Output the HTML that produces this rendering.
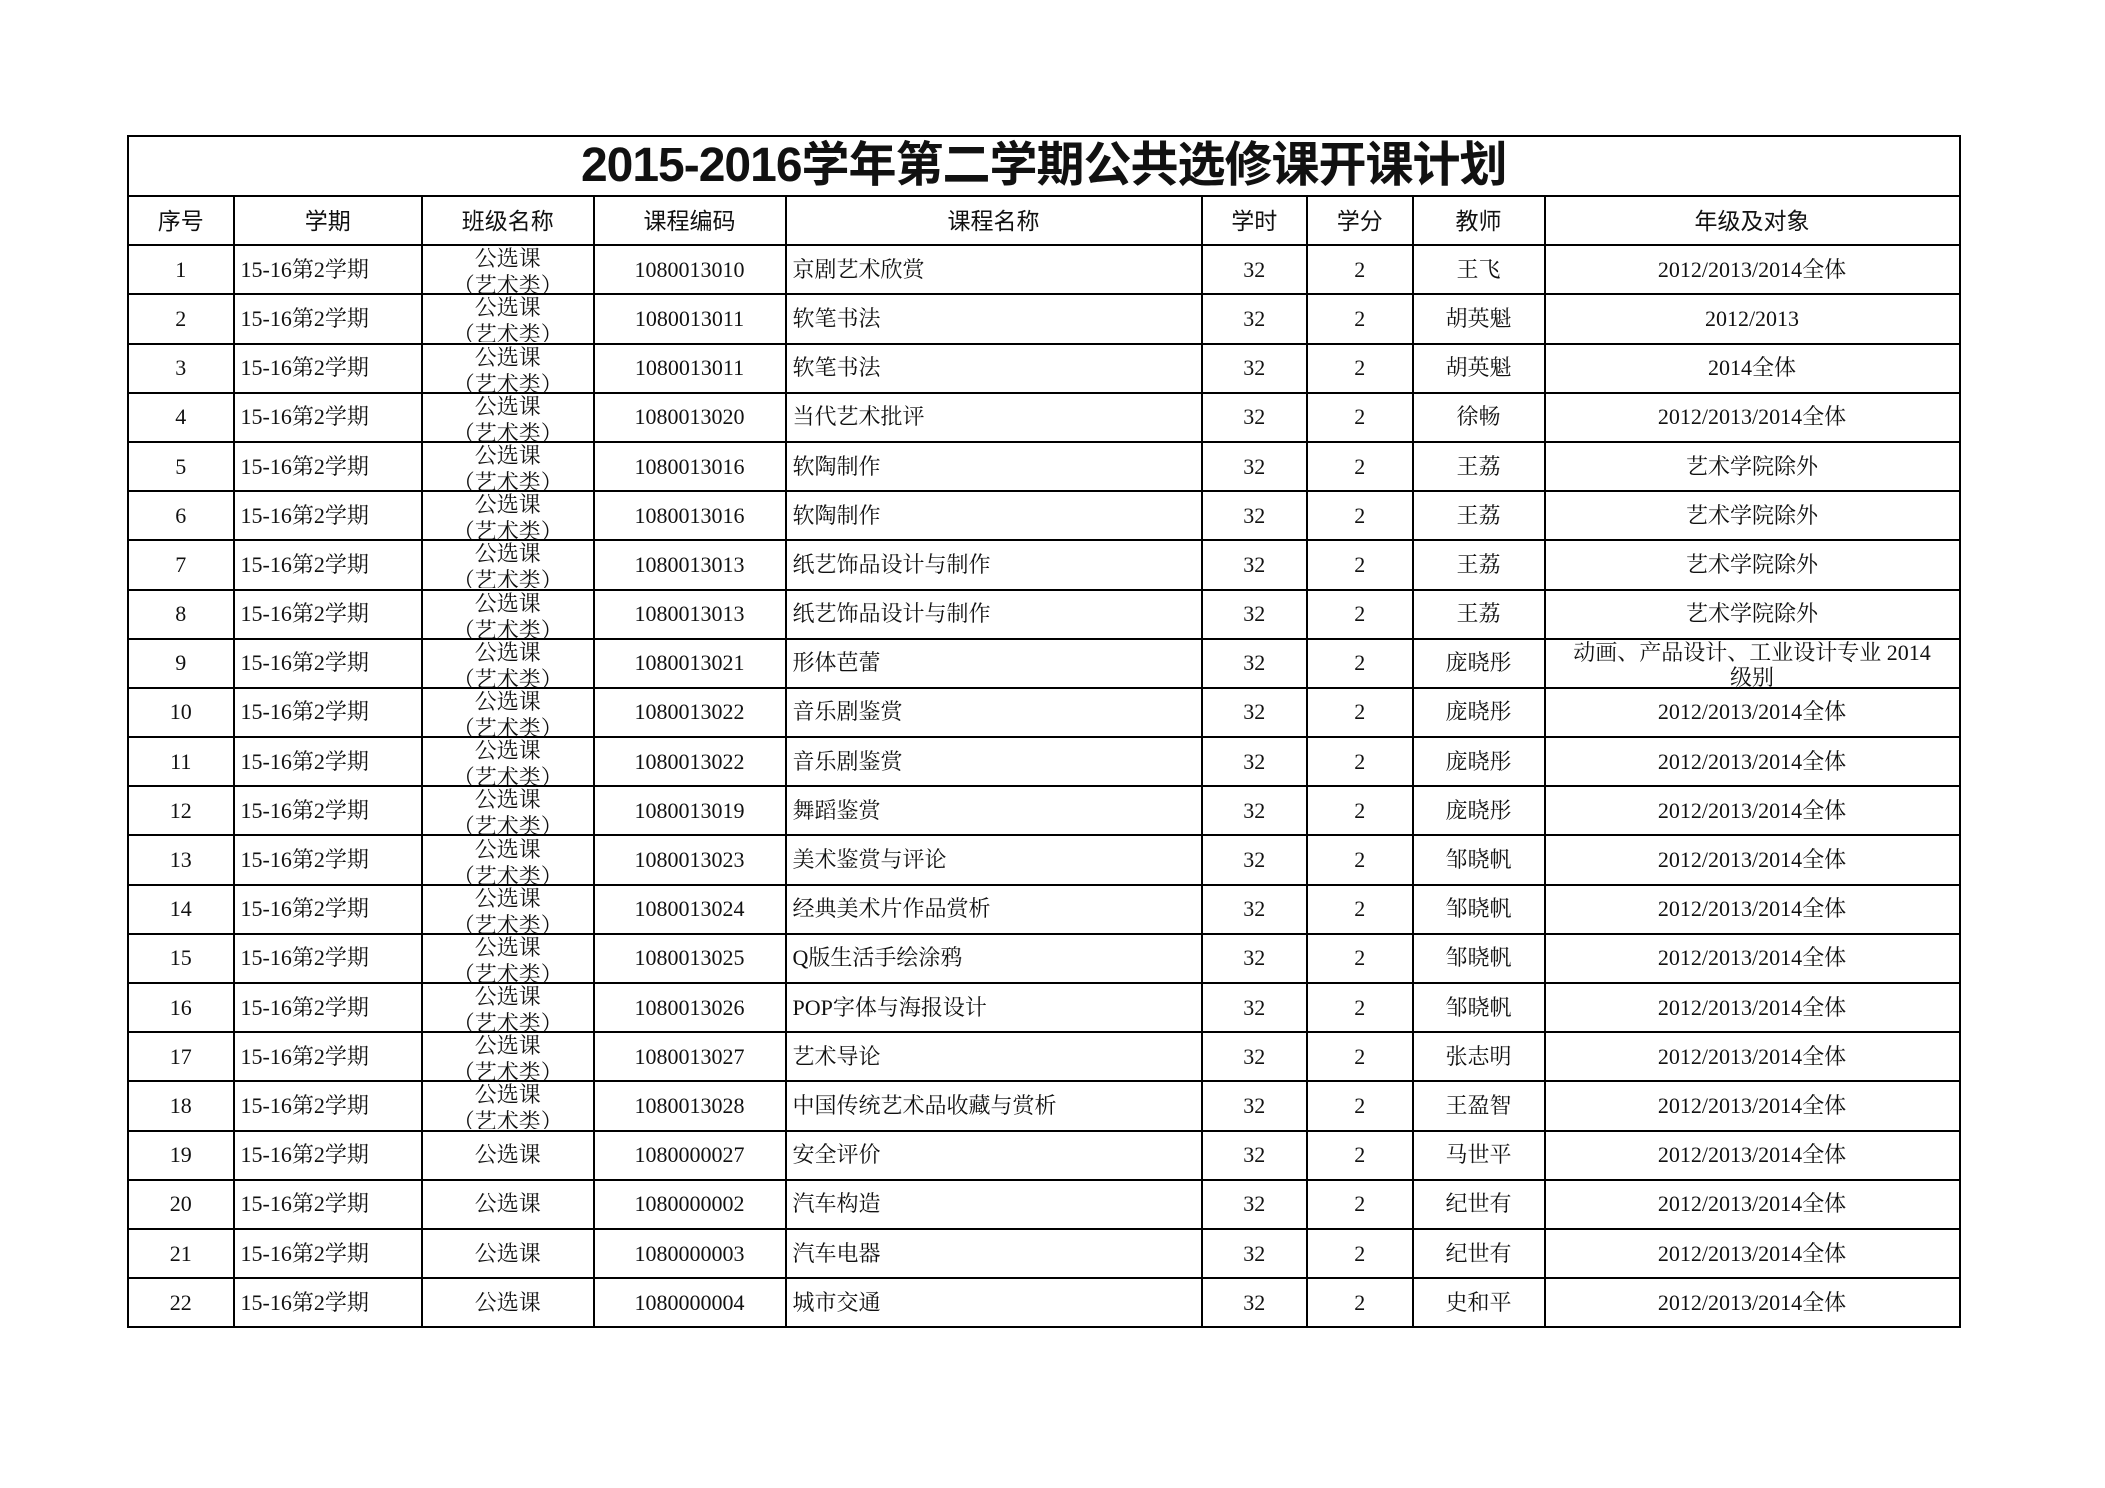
<!DOCTYPE html>
<html><head><meta charset="utf-8"><style>
body{margin:0;background:#fff;width:2105px;height:1488px;position:relative;overflow:hidden}
table{position:absolute;left:127px;top:135px;border-collapse:collapse;table-layout:fixed;width:1832px;font-family:"Liberation Serif","Noto Serif CJK SC",serif;font-size:22px;color:#111}
td{border:2px solid #000;padding:0;text-align:center;vertical-align:middle;height:47.2px;line-height:22px;white-space:nowrap;overflow:hidden}
td.l{text-align:left;padding-left:6px}
.t td{height:58px;font-family:"Liberation Sans","Noto Sans CJK SC",sans-serif;font-weight:bold;font-size:48px;line-height:58px;letter-spacing:-1px}
.h td{font-family:"Liberation Sans","Noto Sans CJK SC",sans-serif;font-size:23px}
.c{height:47px;overflow:hidden;line-height:27px}
.c div{margin-top:-1px}
.w{white-space:normal;line-height:25px}
</style></head><body>
<table>
<colgroup><col style="width:105.5px"><col style="width:188.5px"><col style="width:171.5px"><col style="width:192px"><col style="width:416px"><col style="width:105.5px"><col style="width:105.5px"><col style="width:132px"><col style="width:415px"></colgroup>
<tr class="t"><td colspan="9">2015-2016学年第二学期公共选修课开课计划</td></tr>
<tr class="h"><td>序号</td><td>学期</td><td>班级名称</td><td>课程编码</td><td>课程名称</td><td>学时</td><td>学分</td><td>教师</td><td>年级及对象</td></tr>
<tr><td>1</td><td class="l">15-16第2学期</td><td><div class="c"><div>公选课<br>（艺术类）</div></div></td><td>1080013010</td><td class="l">京剧艺术欣赏</td><td>32</td><td>2</td><td>王飞</td><td>2012/2013/2014全体</td></tr>
<tr><td>2</td><td class="l">15-16第2学期</td><td><div class="c"><div>公选课<br>（艺术类）</div></div></td><td>1080013011</td><td class="l">软笔书法</td><td>32</td><td>2</td><td>胡英魁</td><td>2012/2013</td></tr>
<tr><td>3</td><td class="l">15-16第2学期</td><td><div class="c"><div>公选课<br>（艺术类）</div></div></td><td>1080013011</td><td class="l">软笔书法</td><td>32</td><td>2</td><td>胡英魁</td><td>2014全体</td></tr>
<tr><td>4</td><td class="l">15-16第2学期</td><td><div class="c"><div>公选课<br>（艺术类）</div></div></td><td>1080013020</td><td class="l">当代艺术批评</td><td>32</td><td>2</td><td>徐畅</td><td>2012/2013/2014全体</td></tr>
<tr><td>5</td><td class="l">15-16第2学期</td><td><div class="c"><div>公选课<br>（艺术类）</div></div></td><td>1080013016</td><td class="l">软陶制作</td><td>32</td><td>2</td><td>王荔</td><td>艺术学院除外</td></tr>
<tr><td>6</td><td class="l">15-16第2学期</td><td><div class="c"><div>公选课<br>（艺术类）</div></div></td><td>1080013016</td><td class="l">软陶制作</td><td>32</td><td>2</td><td>王荔</td><td>艺术学院除外</td></tr>
<tr><td>7</td><td class="l">15-16第2学期</td><td><div class="c"><div>公选课<br>（艺术类）</div></div></td><td>1080013013</td><td class="l">纸艺饰品设计与制作</td><td>32</td><td>2</td><td>王荔</td><td>艺术学院除外</td></tr>
<tr><td>8</td><td class="l">15-16第2学期</td><td><div class="c"><div>公选课<br>（艺术类）</div></div></td><td>1080013013</td><td class="l">纸艺饰品设计与制作</td><td>32</td><td>2</td><td>王荔</td><td>艺术学院除外</td></tr>
<tr><td>9</td><td class="l">15-16第2学期</td><td><div class="c"><div>公选课<br>（艺术类）</div></div></td><td>1080013021</td><td class="l">形体芭蕾</td><td>32</td><td>2</td><td>庞晓彤</td><td><div class="c w">动画、产品设计、工业设计专业 2014<br>级别</div></td></tr>
<tr><td>10</td><td class="l">15-16第2学期</td><td><div class="c"><div>公选课<br>（艺术类）</div></div></td><td>1080013022</td><td class="l">音乐剧鉴赏</td><td>32</td><td>2</td><td>庞晓彤</td><td>2012/2013/2014全体</td></tr>
<tr><td>11</td><td class="l">15-16第2学期</td><td><div class="c"><div>公选课<br>（艺术类）</div></div></td><td>1080013022</td><td class="l">音乐剧鉴赏</td><td>32</td><td>2</td><td>庞晓彤</td><td>2012/2013/2014全体</td></tr>
<tr><td>12</td><td class="l">15-16第2学期</td><td><div class="c"><div>公选课<br>（艺术类）</div></div></td><td>1080013019</td><td class="l">舞蹈鉴赏</td><td>32</td><td>2</td><td>庞晓彤</td><td>2012/2013/2014全体</td></tr>
<tr><td>13</td><td class="l">15-16第2学期</td><td><div class="c"><div>公选课<br>（艺术类）</div></div></td><td>1080013023</td><td class="l">美术鉴赏与评论</td><td>32</td><td>2</td><td>邹晓帆</td><td>2012/2013/2014全体</td></tr>
<tr><td>14</td><td class="l">15-16第2学期</td><td><div class="c"><div>公选课<br>（艺术类）</div></div></td><td>1080013024</td><td class="l">经典美术片作品赏析</td><td>32</td><td>2</td><td>邹晓帆</td><td>2012/2013/2014全体</td></tr>
<tr><td>15</td><td class="l">15-16第2学期</td><td><div class="c"><div>公选课<br>（艺术类）</div></div></td><td>1080013025</td><td class="l">Q版生活手绘涂鸦</td><td>32</td><td>2</td><td>邹晓帆</td><td>2012/2013/2014全体</td></tr>
<tr><td>16</td><td class="l">15-16第2学期</td><td><div class="c"><div>公选课<br>（艺术类）</div></div></td><td>1080013026</td><td class="l">POP字体与海报设计</td><td>32</td><td>2</td><td>邹晓帆</td><td>2012/2013/2014全体</td></tr>
<tr><td>17</td><td class="l">15-16第2学期</td><td><div class="c"><div>公选课<br>（艺术类）</div></div></td><td>1080013027</td><td class="l">艺术导论</td><td>32</td><td>2</td><td>张志明</td><td>2012/2013/2014全体</td></tr>
<tr><td>18</td><td class="l">15-16第2学期</td><td><div class="c"><div>公选课<br>（艺术类）</div></div></td><td>1080013028</td><td class="l">中国传统艺术品收藏与赏析</td><td>32</td><td>2</td><td>王盈智</td><td>2012/2013/2014全体</td></tr>
<tr><td>19</td><td class="l">15-16第2学期</td><td>公选课</td><td>1080000027</td><td class="l">安全评价</td><td>32</td><td>2</td><td>马世平</td><td>2012/2013/2014全体</td></tr>
<tr><td>20</td><td class="l">15-16第2学期</td><td>公选课</td><td>1080000002</td><td class="l">汽车构造</td><td>32</td><td>2</td><td>纪世有</td><td>2012/2013/2014全体</td></tr>
<tr><td>21</td><td class="l">15-16第2学期</td><td>公选课</td><td>1080000003</td><td class="l">汽车电器</td><td>32</td><td>2</td><td>纪世有</td><td>2012/2013/2014全体</td></tr>
<tr><td>22</td><td class="l">15-16第2学期</td><td>公选课</td><td>1080000004</td><td class="l">城市交通</td><td>32</td><td>2</td><td>史和平</td><td>2012/2013/2014全体</td></tr>
</table>
</body></html>
